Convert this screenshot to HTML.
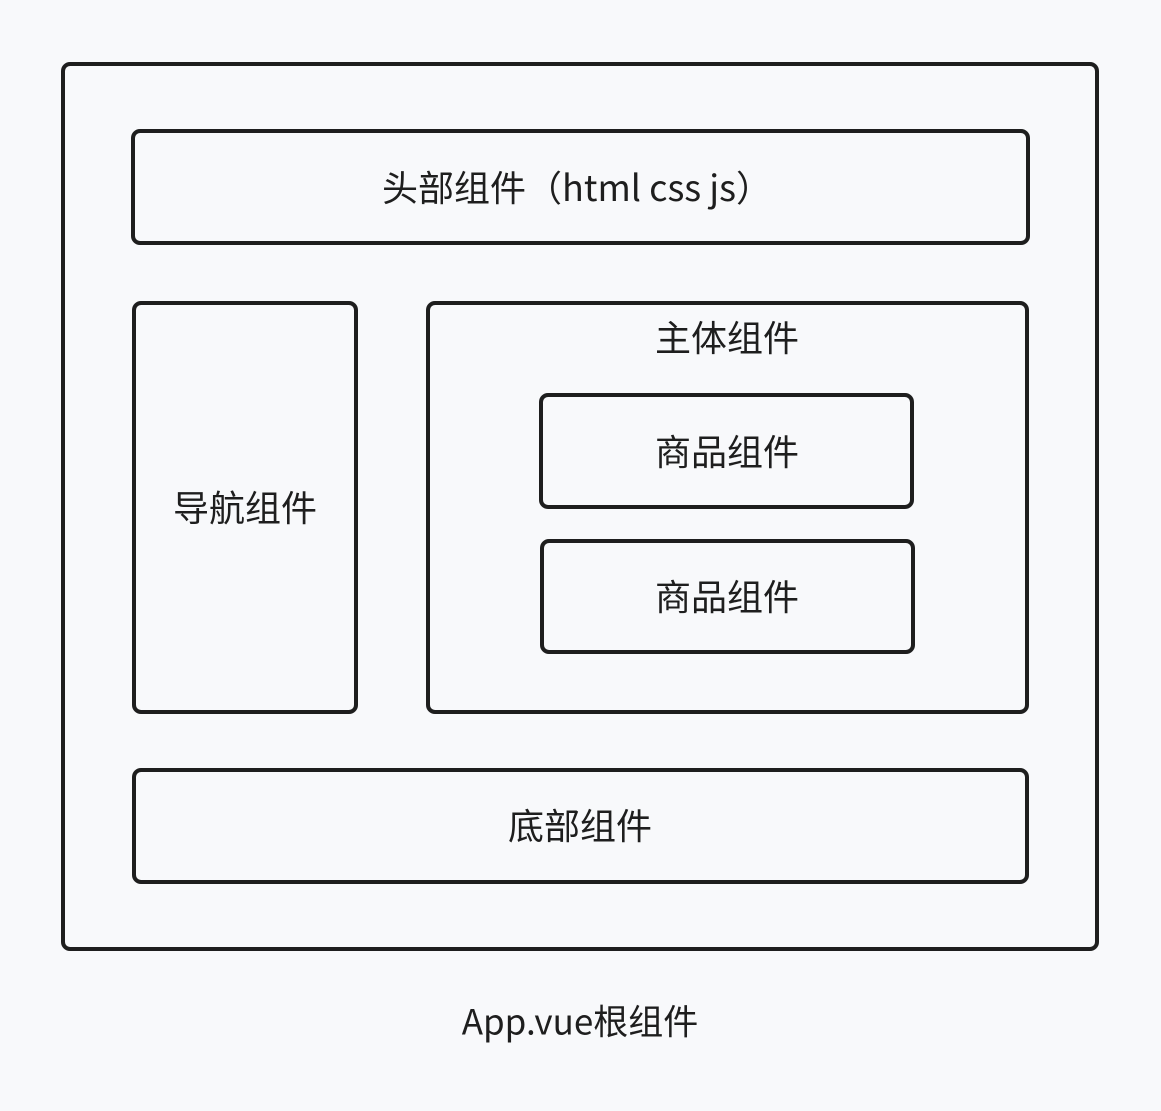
<!DOCTYPE html>
<html><head><meta charset="utf-8"><style>
html,body{margin:0;padding:0;background:#f8f9fb;}
svg{display:block}
text{font-family:"Noto Sans CJK SC","Liberation Sans",sans-serif;fill:#1e1e1e;text-anchor:middle;dominant-baseline:central;}
</style></head><body>
<svg width="1161" height="1111" viewBox="0 0 1161 1111">
<rect width="1161" height="1111" fill="#f8f9fb"/>
<g fill="none" stroke="#1e1e1e" stroke-width="4">
<rect x="63" y="64" width="1034" height="885" rx="7"/>
<rect x="133" y="131" width="895" height="112" rx="7"/>
<rect x="134" y="303" width="222" height="409" rx="7"/>
<rect x="428" y="303" width="599" height="409" rx="7"/>
<rect x="541" y="395" width="371" height="112" rx="7"/>
<rect x="542" y="541" width="371" height="111" rx="7"/>
<rect x="134" y="770" width="893" height="112" rx="7"/>
</g>
<text x="577" y="186" font-size="36">头部组件（html css js）</text>
<text x="727" y="336" font-size="36">主体组件</text>
<text x="727" y="450" font-size="36">商品组件</text>
<text x="727" y="595" font-size="36">商品组件</text>
<text x="245" y="506" font-size="36">导航组件</text>
<text x="580" y="824" font-size="36">底部组件</text>
<text x="580" y="1020" font-size="35">App.vue根组件</text>
</svg>
</body></html>
